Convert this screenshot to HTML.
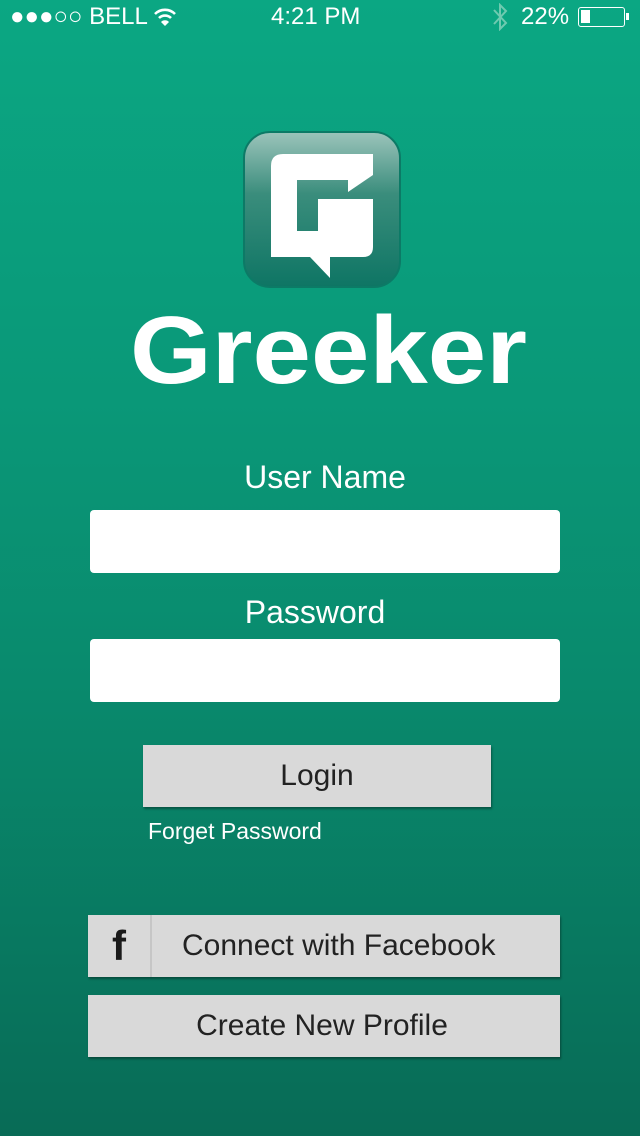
<!DOCTYPE html>
<html><head><meta charset="utf-8">
<style>
*{margin:0;padding:0;box-sizing:border-box}
html,body{width:640px;height:1136px;overflow:hidden}
body{background:linear-gradient(180deg,#0ba783 0%,#0a9878 35%,#098a6d 60%,#086b56 100%);font-family:"Liberation Sans",sans-serif;color:#fff;position:relative}
.abs{position:absolute}
.sb{font-size:24px;top:3px}
.lbl{font-size:32px;width:640px;text-align:center}
.inp{background:#fff;border-radius:4px;left:90px;width:470px;height:63px}
.btn{background:#d9d9d9;color:#222;font-size:30px;box-shadow:1px 2px 2px rgba(0,0,0,.35);display:flex;align-items:center;justify-content:center}
</style></head><body>
<div class="abs sb" style="left:10px">●●●○○ BELL</div>
<svg class="abs" style="left:153px;top:7px" width="24" height="20" viewBox="0 0 24 20"><path d="M2 7a14 14 0 0 1 20 0" stroke="#fff" stroke-width="2.6" fill="none"/><path d="M6 11a8.5 8.5 0 0 1 12 0" stroke="#fff" stroke-width="2.6" fill="none"/><path d="M12 19l-4-4a5.5 5.5 0 0 1 8 0z" fill="#fff"/></svg>
<div class="abs sb" style="left:271px">4:21 PM</div>
<svg class="abs" style="left:490px;top:3px" width="20" height="28" viewBox="0 0 20 28"><path d="M4 7l12 13-6 6V2l6 6L4 21" stroke="#6fcab0" stroke-width="2" fill="none"/></svg>
<div class="abs sb" style="left:521px">22%</div>
<div class="abs" style="left:578px;top:7px;width:47px;height:20px;border:1.5px solid #fff;border-radius:3px"><div style="margin:2px;width:9px;height:13px;background:#fff"></div></div>
<div class="abs" style="left:626px;top:13px;width:3px;height:7px;background:#fff"></div>

<svg class="abs" style="left:0;top:0" width="640" height="400">
<defs><linearGradient id="ig" x1="0" y1="0" x2="0" y2="1"><stop offset="0" stop-color="#9cc4bb"/><stop offset=".4" stop-color="#3a8d7c"/><stop offset="1" stop-color="#0e7564"/></linearGradient></defs>
<rect x="244" y="132" width="156" height="155" rx="26" fill="url(#ig)" stroke="#0c7a66" stroke-width="2"/>
<path fill="#fff" d="M283 154H373V175L348 192V180H297V231H318V199H373V247Q373 257 363 257H330V278L310 257H271V166Q271 154 283 154Z"/>
<text x="130" y="383" textLength="397" lengthAdjust="spacingAndGlyphs" font-family="Liberation Sans,sans-serif" font-weight="bold" font-size="96" fill="#fff">Greeker</text>
</svg>

<div class="abs lbl" style="top:459px;left:5px">User Name</div>
<div class="abs inp" style="top:510px"></div>
<div class="abs lbl" style="top:594px;left:-5px">Password</div>
<div class="abs inp" style="top:639px"></div>
<div class="abs btn" style="left:143px;top:745px;width:348px;height:62px">Login</div>
<div class="abs" style="left:148px;top:818px;font-size:23px">Forget Password</div>
<div class="abs btn" style="left:88px;top:915px;width:472px;height:62px;justify-content:flex-start">
<div style="width:64px;height:62px;border-right:2px solid #c6c6c6;display:flex;align-items:center;justify-content:center;font-weight:bold;font-size:42px;color:#1a1a1a">f</div>
<div style="padding-left:30px">Connect with Facebook</div></div>
<div class="abs btn" style="left:88px;top:995px;width:472px;height:62px"><span style="margin-left:-4px">Create New Profile</span></div>
</body></html>
